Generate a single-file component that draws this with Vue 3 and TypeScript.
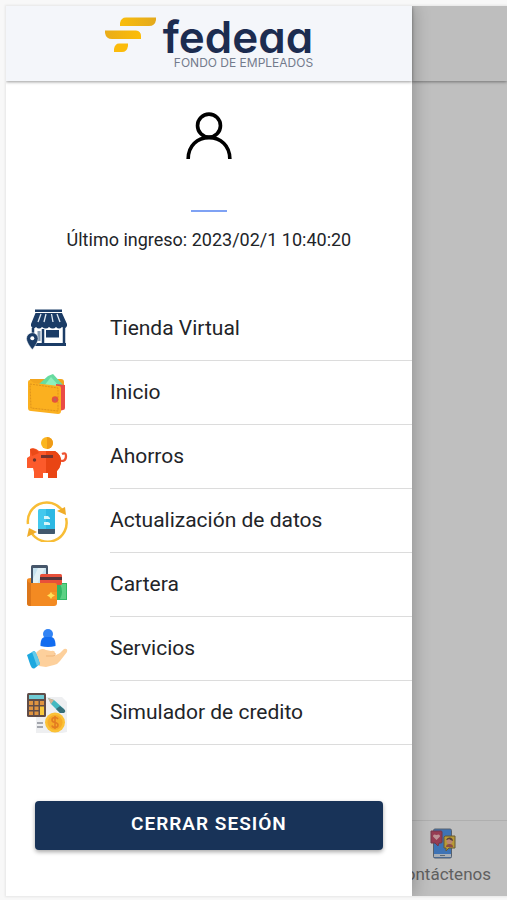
<script setup lang="ts">
type IconName = 'shop' | 'wallet' | 'piggy' | 'update' | 'cards' | 'service' | 'calculator'

interface MenuItem {
  label: string
  icon: IconName
}

const lastLogin: string = '2023/02/1 10:40:20'

const items: MenuItem[] = [
  { label: 'Tienda Virtual', icon: 'shop' },
  { label: 'Inicio', icon: 'wallet' },
  { label: 'Ahorros', icon: 'piggy' },
  { label: 'Actualización de datos', icon: 'update' },
  { label: 'Cartera', icon: 'cards' },
  { label: 'Servicios', icon: 'service' },
  { label: 'Simulador de credito', icon: 'calculator' },
]
</script>

<template>
  <div class="screen">
    <div class="frame">
      <aside class="drawer">
        <header class="bar brand">
          <svg class="mark" viewBox="0 0 52 36" aria-hidden="true">
            <defs>
              <linearGradient id="gold" x1="0" y1="0" x2="1" y2="0">
                <stop offset="0" stop-color="#f9bd0c" />
                <stop offset="1" stop-color="#e3a91d" />
              </linearGradient>
              <linearGradient id="goldBack" x1="0" y1="0" x2="1" y2="0">
                <stop offset="0" stop-color="#e9ac18" />
                <stop offset="1" stop-color="#fcbd08" />
              </linearGradient>
            </defs>
            <path d="M21 0.500H51V3Q50 9 44 9H15V6Q16 0.500 21 0.500Z" fill="url(#gold)" />
            <path d="M0 13.500H31Q36 14 36 19V22H7Q1 22 0 16Z" fill="url(#goldBack)" />
            <path d="M14 26.500H23V29Q22 35 17 35H9V32Q10 26.500 14 26.500Z" fill="#fbbb0b" />
          </svg>
          <div class="brand-text">
            <span class="name">fedeaa</span>
            <span class="tagline">FONDO DE EMPLEADOS</span>
          </div>
        </header>

        <section class="profile">
          <svg class="avatar" viewBox="0 0 48 48" aria-hidden="true">
            <g fill="none" stroke="#000" stroke-width="3.500">
              <circle cx="24" cy="15" r="11" />
              <path d="M4 47C4 34 13 26.500 24 26.500S44 34 44 47" />
            </g>
          </svg>
          <a class="profile-link" href="#" aria-label="Perfil"></a>
          <p class="last-login">Último ingreso: {{ lastLogin }}</p>
        </section>

        <nav class="menu">
          <a v-for="item in items" :key="item.label" class="item" href="#">
            <svg class="icon" viewBox="0 0 42 42" aria-hidden="true">
              <g v-if="item.icon === 'shop'">
                <path d="M9 1.500H36V4H9Z" fill="#1b3c66" />
                <path d="M9.500 5H36L41 16V18Q39 22 36 19Q33 22 30 19Q27 22 23 19Q20 22 16 19Q13 22 10 19Q7 22 5 18V16Z" fill="#1b3c66" />
                <path d="M15 6L12 14M20 6L18 14M25.500 6L27 14M31 6L34 14" stroke="#dfe8f1" stroke-width="1.300" />
                <path d="M7 20V27M38 20V37M17 21V37" stroke="#1b3c66" stroke-width="2.500" />
                <path d="M9 35H40V38H9Z" fill="#1b3c66" />
                <path d="M20 22H33V29.500H20Z" fill="#1b3c66" />
                <path d="M13 23V33" stroke="#8399b0" stroke-width="3" />
                <path d="M0.500 30.500A5.800 5.800 0 0 1 12.100 30.500C12.100 35 6.300 41.500 6.300 41.500S0.500 35 0.500 30.500Z" fill="#1b3c66" stroke="#fff" stroke-width="0.500" />
                <circle cx="6.300" cy="30.300" r="2" fill="#fff" />
              </g>
              <g v-else-if="item.icon === 'wallet'">
                <path d="M4 7H35Q38 7 38 10V16H4Z" fill="#f2a51d" />
                <path d="M13 12L22 4L27 2L37 13V16H11Z" fill="#67dba0" />
                <path d="M25 5L33 14H18Z" fill="#8df0bb" />
                <path d="M30 12L39 13V36Q39 38 37 38L30 40Z" fill="#ea4b46" />
                <path d="M2 10Q2 8 4 8L8 11L33 14Q35 14 35 16V39Q35 42 32 42L5 39Q2 39 2 36Z" fill="#fbb01f" />
                <path d="M4 12L32 16V39L5 36Z" fill="none" stroke="#df931b" stroke-width="1" stroke-dasharray="2 1" />
                <circle cx="29" cy="27.500" r="3.200" fill="#e5533c" />
                <circle cx="29" cy="27.500" r="1.200" fill="#b46a5c" />
              </g>
              <g v-else-if="item.icon === 'piggy'">
                <circle cx="21" cy="7" r="6" fill="#fbb61e" />
                <path d="M21 1A6 6 0 0 1 21 13Z" fill="#ef9b17" />
                <path d="M32 24Q40 27 40 20Q40 16 36 18" fill="none" stroke="#ee5330" stroke-width="2.300" />
                <path d="M4 13Q9 11 13 15H29Q36 19 35 27Q34 32 31 35V42H22V37H17V42H8V36L7 32H1V22L4 20Z" fill="#fc5a2b" />
                <path d="M20 15H29Q36 19 35 27Q34 32 31 35V42H22V37H20Z" fill="#e94514" />
                <path d="M4 13Q9 11 13 17L6 20Z" fill="#eb4a18" />
                <path d="M15 19H27V22H15Z" fill="#74342e" />
                <circle cx="8.500" cy="24" r="1.700" fill="#70352d" />
              </g>
              <g v-else-if="item.icon === 'update'">
                <path d="M2 24A19 19 0 0 1 36 10M40 18A19 19 0 0 1 5 32" fill="none" stroke="#f8bd35" stroke-width="2.500" />
                <path d="M31 11L39 7L40 15Z" fill="#f0ac28" />
                <path d="M1 37L3 28L11 32Z" fill="#f0ac28" />
                <rect x="12" y="9" width="17" height="25" rx="1.500" fill="#42c8ed" />
                <path d="M20 9H29V29H20Z" fill="#2db8e3" />
                <path d="M12 29H29V33Q29 34 28 34H13Q12 34 12 33Z" fill="#42586d" />
                <path d="M18 16H22L24 18V19H18ZM18 22H22L24 23V25H18Z" fill="#d7f5fa" />
              </g>
              <g v-else-if="item.icon === 'cards'">
                <rect x="5" y="1" width="17" height="24" rx="1.500" fill="#46566a" />
                <path d="M7 4H20V22H7Z" fill="#c6e2ef" />
                <path d="M12 4L7 15V22H10L19 4Z" fill="#e2f1f6" />
                <path d="M12 19H41V36H12Z" fill="#31b866" />
                <path d="M34 20H40V35H34Q38 28 34 20Z" fill="#5bd184" />
                <rect x="14" y="10" width="22" height="11" rx="1.500" fill="#e8503a" />
                <path d="M14 13H36V16H14Z" fill="#54353b" />
                <path d="M1 16Q1 14 5 14V19H29Q31 19 31 21V39Q31 42 28 42H4Q1 42 1 39Z" fill="#f38a22" />
                <path d="M1 16Q2 19 5 19V42H4Q1 42 1 39Z" fill="#dc761a" />
                <path d="M24 28H31V35H24Q21 31.500 24 28Z" fill="#f59725" />
                <path d="M25 28L26.200 30L29 31.500L26.200 33L25 35L23.700 33L21 31.500L23.700 30Z" fill="#ffe15a" />
              </g>
              <g v-else-if="item.icon === 'service'">
                <circle cx="22" cy="6" r="5" fill="#3183f4" />
                <path d="M14.500 16Q15 9 19 9H25Q29 9 29.500 16V18Q22 20 14.500 18Z" fill="#126cf0" />
                <path d="M10 25Q15 19 20 22L25 23Q29 22 29 25L28 28L34 25L38 21Q42 20 41 24L34 33Q32 36 28 37L20 39L13 38Z" fill="#fdd09c" />
                <path d="M20 28H27Q30 28 29 25" fill="none" stroke="#efb57a" stroke-width="1" />
                <path d="M1 27L8 23Q10 23 14 36L9 40Q6 42 4 36Z" fill="#1ca8df" />
                <path d="M6 24L8 23Q10 23 14 36L11 38Z" fill="#65cbea" />
              </g>
              <g v-else>
                <path d="M10 5H36L41 10V40L36 41L10 41Z" fill="#eeeff1" />
                <rect x="1" y="1" width="19" height="24" rx="1.500" fill="#604d49" />
                <path d="M3 3H18V7H3Z" fill="#70ccd5" />
                <path d="M3 9H7V13H3ZM8.500 9H12.500V13H8.500ZM14 9H18V13H14ZM3 14.500H7V18H3ZM8.500 14.500H12.500V18H8.500ZM3 19.500H7V23H3ZM8.500 19.500H12.500V23H8.500Z" fill="#df9440" />
                <path d="M14 14.500H18V23H14Z" fill="#f8c83c" />
                <path d="M22 6L28 8L38 17L34 21L25 12Z" fill="#45b9c1" />
                <path d="M22 6L28 8L25 12Z" fill="#d7b394" />
                <path d="M34 14L39 18Q40 20 38 21L34 21L30 17Z" fill="#366f7a" />
                <path d="M11 31H17M11 35H17" stroke="#8a8f97" stroke-width="1.500" />
                <circle cx="29" cy="30.500" r="10" fill="#fbc136" />
                <circle cx="29" cy="30.500" r="7.500" fill="#f6ac28" />
                <path d="M32 27Q31 25.500 29 25.500Q26 25.500 26 28Q26 30 29 30.500Q32 31 32 33Q32 35.500 29 35.500Q26.500 35.500 26 33.500M29 24V37" fill="none" stroke="#e37c21" stroke-width="1.600" />
              </g>
            </svg>
            <span class="label">{{ item.label }}</span>
          </a>
        </nav>

        <button class="logout" type="button">CERRAR SESIÓN</button>
      </aside>

      <div class="backdrop">
        <div class="bar shaded"></div>
        <div class="tabs">
          <button class="tab" type="button">
            <svg class="tab-icon" viewBox="0 0 26 31" aria-hidden="true">
              <rect x="3.500" y="1" width="18" height="29" rx="1.500" fill="#3e73b5" stroke="#56606c" stroke-width="1" />
              <path d="M4 26H21V29H4Z" fill="#a8afb7" />
              <path d="M10 27.500H15" stroke="#606b75" stroke-width="1" />
              <path d="M1 3H11Q12 3 12 4V14Q12 15 11 15H9L8 18L5 15H1Z" fill="#963c53" stroke="#70394a" stroke-width="1" />
              <path d="M6.500 12L3 8.500Q3 5.500 6.500 7Q10 5.500 10 8.500Z" fill="#bd9295" />
              <path d="M15 8H25V20H19L16 23V20H14V9Z" fill="#b99a35" stroke="#665b38" stroke-width="1" />
              <circle cx="19.500" cy="13" r="3" fill="#bb8572" />
              <path d="M16 12Q17 9 20 9.500Q23 10 23 13Q20 12 19 11Q18 12 16 12Z" fill="#57423b" />
              <path d="M16 19Q16 16 19.500 16T23 19Z" fill="#8d4c45" />
            </svg>
            <span>Contáctenos</span>
          </button>
        </div>
      </div>
    </div>
  </div>
</template>

<style>
body {
  margin: 0;
}
</style>

<style scoped>
.screen {
  box-sizing: border-box;
  min-height: 100vh;
  display: flex;
  padding: 6px 0 4px 6px;
  background: #f8f8f8;
  font-family: Roboto, "Liberation Sans", sans-serif;
  color: #222428;
}

.frame {
  flex: 1;
  display: flex;
  min-width: 0;
  box-shadow: 0 0 2px 1px #e6e6e6;
}

.drawer {
  flex: 0 0 81%;
  position: relative;
  display: flex;
  flex-direction: column;
  background: #fff;
  box-shadow: 2px 0 16px rgba(0, 0, 0, 0.24);
  clip-path: inset(0 -24px 0 0);
}

.bar {
  box-sizing: border-box;
  height: 75px;
  flex: none;
  background: #f4f6fa;
  box-shadow: 0 1px 3px rgba(0, 0, 0, 0.4);
}

.brand {
  display: flex;
  justify-content: center;
  align-items: flex-start;
  gap: 6px;
  padding-top: 11px;
}

.mark {
  width: 52px;
  height: 36px;
}

.brand-text {
  display: flex;
  flex-direction: column;
  align-items: flex-end;
  font-family: Inter, "Open Sans", sans-serif;
}

.name {
  font-size: 44px;
  line-height: 40px;
  font-weight: 600;
  font-feature-settings: "cv11";
  color: #1c2c50;
}

.tagline {
  font-size: 12px;
  line-height: 12px;
  font-weight: 400;
  color: #737b8c;
}

.profile {
  display: flex;
  flex-direction: column;
  align-items: center;
  padding-top: 29px;
}

.avatar {
  width: 50px;
  height: 50px;
}

.profile-link {
  width: 36px;
  height: 50px;
  border-bottom: 2px solid #7fa2f4;
}

.last-login {
  margin: 16px 0 0;
  font-size: 18px;
  line-height: 24px;
}

.menu {
  display: flex;
  flex-direction: column;
  margin-top: 45px;
}

.item {
  display: grid;
  grid-template-columns: 42px 1fr;
  align-items: center;
  column-gap: 42px;
  padding-left: 20px;
  color: inherit;
  text-decoration: none;
}

.icon {
  width: 42px;
  height: 42px;
}

.label {
  padding: 19px 0 20px;
  border-bottom: 1px solid #dcdcdc;
  font-size: 21px;
  line-height: 24px;
}

.logout {
  height: 49px;
  margin: 56px 29px 0;
  padding: 0 0 4px;
  border: 0;
  border-radius: 4px;
  background: #183358;
  box-shadow: 0 2px 4px rgba(0, 0, 0, 0.35);
  color: #fff;
  font-family: inherit;
  font-size: 19px;
  font-weight: 600;
  letter-spacing: 1px;
}

.backdrop {
  flex: 1;
  min-width: 0;
  display: flex;
  flex-direction: column;
  justify-content: space-between;
  overflow: hidden;
  background: #bfbfbf;
}

.shaded {
  background: #bebebe;
}

.tabs {
  display: flex;
  justify-content: flex-end;
  padding: 7px 16px 10px 0;
  border-top: 1px solid #afafaf;
}

.tab {
  flex: none;
  display: flex;
  flex-direction: column;
  align-items: center;
  gap: 3px;
  padding: 0;
  border: 0;
  background: none;
  color: #606060;
  font-family: inherit;
  font-size: 17px;
  line-height: 24px;
}

.tab-icon {
  width: 26px;
  height: 31px;
}
</style>
